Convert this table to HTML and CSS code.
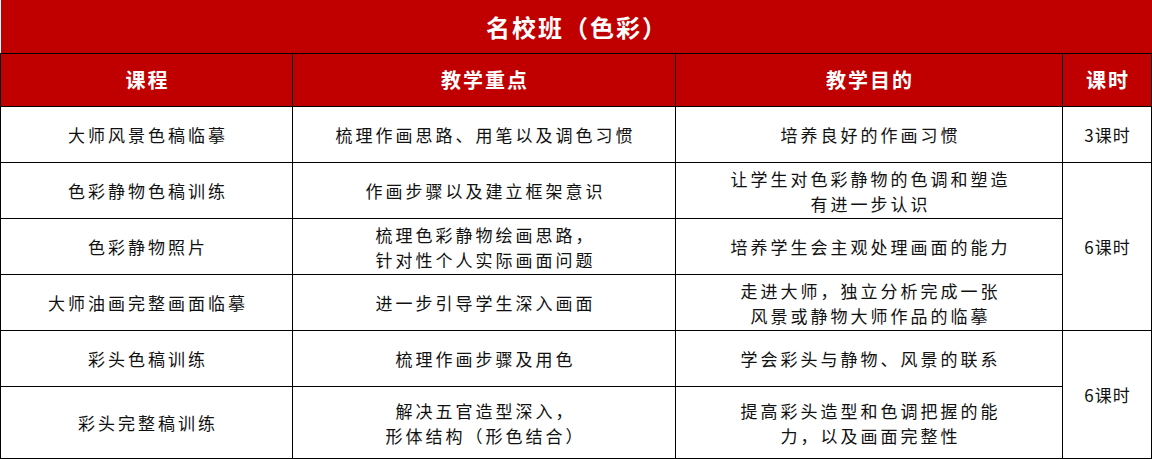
FILE: index.html
```html
<!DOCTYPE html>
<html lang="zh-CN">
<head>
<meta charset="utf-8">
<title>名校班（色彩）</title>
<link rel="stylesheet" href="styles.css">
</head>
<body>
<table class="plan">
  <colgroup>
    <col class="c-course">
    <col class="c-focus">
    <col class="c-goal">
    <col class="c-hours">
  </colgroup>
  <thead>
    <tr class="r-title"><th colspan="4" class="title">名校班（色彩）</th></tr>
    <tr class="r-head">
      <th>课程</th>
      <th>教学重点</th>
      <th>教学目的</th>
      <th>课时</th>
    </tr>
  </thead>
  <tbody>
    <tr class="r-body">
      <td>大师风景色稿临摹</td>
      <td>梳理作画思路、用笔以及调色习惯</td>
      <td>培养良好的作画习惯</td>
      <td class="hours">3课时</td>
    </tr>
    <tr class="r-body">
      <td>色彩静物色稿训练</td>
      <td>作画步骤以及建立框架意识</td>
      <td>让学生对色彩静物的色调和塑造<br>有进一步认识</td>
      <td class="hours" rowspan="3">6课时</td>
    </tr>
    <tr class="r-body">
      <td>色彩静物照片</td>
      <td>梳理色彩静物绘画思路，<br>针对性个人实际画面问题</td>
      <td>培养学生会主观处理画面的能力</td>
    </tr>
    <tr class="r-body">
      <td>大师油画完整画面临摹</td>
      <td>进一步引导学生深入画面</td>
      <td>走进大师，独立分析完成一张<br>风景或静物大师作品的临摹</td>
    </tr>
    <tr class="r-body">
      <td>彩头色稿训练</td>
      <td>梳理作画步骤及用色</td>
      <td>学会彩头与静物、风景的联系</td>
      <td class="hours" rowspan="2">6课时</td>
    </tr>
    <tr class="r-last">
      <td>彩头完整稿训练</td>
      <td>解决五官造型深入，<br>形体结构（形色结合）</td>
      <td>提高彩头造型和色调把握的能<br>力，以及画面完整性</td>
    </tr>
  </tbody>
</table>
</body>
</html>
```

FILE: styles.css
```css
html, body {
  margin: 0;
  padding: 0;
  background: #ffffff;
}

.plan {
  border-collapse: collapse;
  table-layout: fixed;
  width: 1151px;
  font-family: "Noto Sans CJK SC", "Noto Sans", sans-serif;
  color: #111;
}

.c-course { width: 292px; }
.c-focus { width: 383px; }
.c-goal { width: 387px; }
.c-hours { width: 89px; }

.plan th,
.plan td {
  border: 1px solid #000;
  text-align: center;
  vertical-align: middle;
  padding: 0;
}

.plan .title {
  background: #c00000;
  color: #fff;
  font-size: 24px;
  font-weight: 700;
  letter-spacing: 2px;
  padding-left: 2px;
  border-top: none;
  border-left: none;
  border-right: none;
  height: 53px;
  line-height: 28px;
}

.r-head th {
  background: #c00000;
  color: #fff;
  font-size: 20px;
  font-weight: 700;
  letter-spacing: 2px;
  padding-left: 2px;
  height: 52px;
  line-height: 24px;
}

.plan td {
  font-size: 17px;
  letter-spacing: 3px;
  line-height: 25px;
  padding-left: 3px;
}

.r-body td { height: 55px; }
.r-last td { height: 71px; }

.plan td.hours {
  letter-spacing: 1px;
  padding-left: 1px;
}
```
